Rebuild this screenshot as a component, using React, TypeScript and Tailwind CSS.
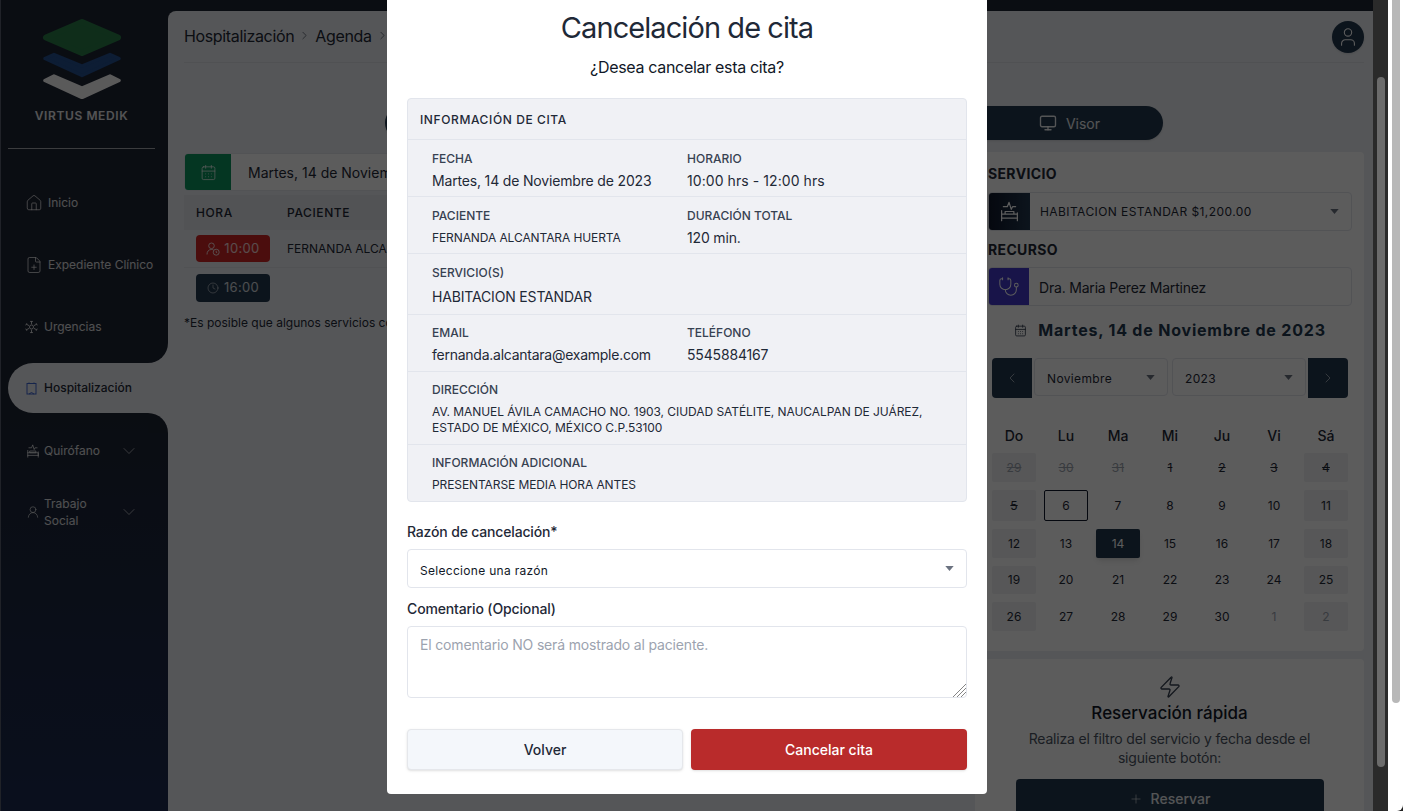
import { Home, FilePlus, Monitor, Stethoscope, Zap, Plus, ChevronLeft, ChevronRight, ChevronDown, User, Clock, UserRound, CalendarDays } from "lucide-react";

const Caret = ({ className = "" }: { className?: string }) => (
  <svg width="9" height="5" viewBox="0 0 10 6" className={className}><path d="M0 0h10L5 6z" fill="currentColor" /></svg>
);

const BedPulse = ({ size = 24, className = "" }: { size?: number; className?: string }) => (
  <svg width={size} height={size} viewBox="0 0 24 24" fill="none" stroke="currentColor" strokeWidth="1.4" strokeLinecap="round" strokeLinejoin="round" className={className}>
    <path d="M5 6.5h4.5l2-5 2.5 8 1.5-3H19" />
    <path d="M3 11v11.5M21 13.5v9M3 19.5h18M3 15h18v4.500M7 12h10v3H7z" />
  </svg>
);

const UserClock = () => (
  <svg width="14" height="14" viewBox="0 0 14 14" fill="none" stroke="currentColor" strokeWidth="1">
    <circle cx="5.5" cy="3.8" r="2.8" />
    <path d="M1 12.500c0-3 1.500-5 4.500-5 .8 0 1.500.1 2 .4" />
    <circle cx="10.200" cy="10.200" r="3" />
    <path d="M10.200 8.800v1.500l1 .6" />
  </svg>
);

const VirusIcon = ({ className = "" }: { className?: string }) => (
  <svg width="13" height="14" viewBox="0 0 14 14" fill="none" stroke="currentColor" strokeWidth="1" className={className}>
    <circle cx="7" cy="7" r="2.2" />
    <path d="M7 1v3M7 10v3M1.500 4l2.800 1.500M9.700 8.500 12.500 10M1.500 10l2.800-1.500M9.700 5.500 12.500 4" />
    <path d="M5.500 1h3M5.500 13h3M.8 5.200 2 3M12 11l1.200-2.200M.8 8.800 2 11M12 3l1.200 2.200" />
  </svg>
);

const Logo = () => (
  <svg width="80" height="80" viewBox="0 0 80 80" className="mx-auto">
    <path d="M40 3 76 18.500 40 34 4 18.500Z" fill="#2a7d49" stroke="#2a7d49" strokeWidth="6" strokeLinejoin="round" />
    <path d="M3 39.500 12 35.500 40 47 68 35.500 77 39.500 40 56.500Z" fill="#245090" stroke="#245090" strokeWidth="3.5" strokeLinejoin="round" />
    <path d="M3 61.500 12 57 40 69 68 57 77 61.500 40 78.500Z" fill="#fafafa" stroke="#fafafa" strokeWidth="3.5" strokeLinejoin="round" />
  </svg>
);

const nav = [
  { label: "Inicio", icon: <Home size={18} strokeWidth={1.1} />, gap: "gap-[5px]" },
  { label: "Expediente Clínico", icon: <FilePlus size={18} strokeWidth={1.1} />, gap: "gap-[5px]" },
  { label: "Urgencias", icon: <VirusIcon />, gap: "gap-[6px]" },
];

const Field = ({ label, value, small, mt = "mt-[4px]", trk = "tracking-[-0.012em]" }: { label: string; value: string; small?: boolean; mt?: string; trk?: string }) => (
  <div>
    <div className="text-xs font-medium leading-4 text-[#374151]">{label}</div>
    <div className={`${mt} leading-5 text-[#1f2937] ${small ? "text-xs tracking-[-0.008em]" : `text-sm ${trk}`}`}>{value}</div>
  </div>
);

const InfoRow = ({ children, className = "" }: { children: React.ReactNode; className?: string }) => (
  <div className={`border-t border-[#e2e5ec] pl-[24px] ${className}`}>{children}</div>
);

const days: { d: string; weekend?: boolean; strike?: boolean; faded?: boolean; outline?: boolean; active?: boolean }[][] = [
  [{ d: "29", weekend: true, strike: true, faded: true }, { d: "30", strike: true, faded: true }, { d: "31", strike: true, faded: true }, { d: "1", strike: true }, { d: "2", strike: true }, { d: "3", strike: true }, { d: "4", weekend: true, strike: true }],
  [{ d: "5", weekend: true, strike: true }, { d: "6", outline: true }, { d: "7" }, { d: "8" }, { d: "9" }, { d: "10" }, { d: "11", weekend: true }],
  [{ d: "12", weekend: true }, { d: "13" }, { d: "14", active: true }, { d: "15" }, { d: "16" }, { d: "17" }, { d: "18", weekend: true }],
  [{ d: "19", weekend: true }, { d: "20" }, { d: "21" }, { d: "22" }, { d: "23" }, { d: "24" }, { d: "25", weekend: true }],
  [{ d: "26", weekend: true }, { d: "27" }, { d: "28" }, { d: "29" }, { d: "30" }, { d: "1", faded: true }, { d: "2", weekend: true, faded: true }],
];

const Calendar = () => (
  <div className="ml-[4px] mt-[28px] w-[356px]">
    <div className="grid grid-cols-7 gap-x-2 text-center text-sm font-medium leading-5 text-[#1f2937]">
      {["Do", "Lu", "Ma", "Mi", "Ju", "Vi", "Sá"].map((d) => <div key={d}>{d}</div>)}
    </div>
    <div className="mt-[7px] grid grid-cols-7 grid-rows-[29px_31px_29px_28px_29px] gap-x-2 gap-y-2">
      {days.flat().map((c, i) => (
        <div
          key={i}
          className={`flex h-full items-center justify-center rounded-[2px] text-xs ${c.weekend ? "bg-[#f0f1f3]" : ""} ${c.strike ? "line-through" : ""} ${c.faded ? "text-[#9ca3af]" : "text-[#1f2937]"} ${c.outline ? "border border-[#0f172a]" : ""} ${c.active ? "bg-[#22384f] text-white shadow-md" : ""}`}
        >
          {c.d}
        </div>
      ))}
    </div>
  </div>
);

export default function App() {
  return (
    <div className="flex h-[811px] w-[1403px] overflow-hidden bg-white [font-family:Inter,sans-serif]">
      <div className="relative flex h-full w-[1373px] shrink-0 overflow-hidden bg-gradient-to-b from-[#1e2433] via-[#1e2433] to-[#1c2b52]">
        {/* Sidebar */}
        <aside className="flex w-[168px] shrink-0 flex-col border-l border-[#5a6070] pl-[7px] text-white">
          <div className="pr-[13px] pt-[19px]">
            <Logo />
            <div className="mt-[9px] text-center text-xs font-semibold leading-4 tracking-[0.05em] text-white/90">VIRTUS MEDIK</div>
            <div className="mt-[24px] h-px bg-white/60" />
          </div>
          <nav className="mt-[28px] flex flex-col gap-3">
            {nav.map((n) => (
              <div key={n.label} className={`flex h-[50px] items-center pl-[17px] pt-[2px] text-xs text-white/85 ${n.gap}`}>
                {n.icon}<span>{n.label}</span>
              </div>
            ))}
            <div className="relative flex h-[50px] items-center gap-[7px] rounded-l-full bg-[#eceff4] pl-[18px] text-xs font-medium text-[#1f2937]">
              <div className="absolute -top-5 right-0 h-5 w-5 bg-[#eceff4]"><div className="h-full w-full rounded-br-[20px] bg-[#1e2433]" /></div>
              <div className="absolute -bottom-5 right-0 h-5 w-5 bg-[#eceff4]"><div className="h-full w-full rounded-tr-[20px] bg-[#1e2433]" /></div>
              <svg width="11" height="13" viewBox="0 0 11 13" fill="none" stroke="#3f66d0" strokeWidth="1"><rect x="1" y="1.500" width="9" height="10.500" /><path d="M3 1.500V.5M8 1.500V.5M3 12l2.500-1.500L8 12" /></svg>
              <span>Hospitalización</span>
            </div>
            <div className="flex h-[50px] items-center pl-[18px] pr-[29px] pt-[2px] text-xs text-white/85">
              <BedPulse size={14} />
              <span className="ml-[4px] flex-1">Quirófano</span>
              <ChevronDown size={20} strokeWidth={0.8} />
            </div>
            <div className="flex h-[50px] items-center pl-[18px] pr-[29px] text-xs leading-[17px] text-white/85">
              <UserRound size={14} strokeWidth={1.2} />
              <span className="ml-[4px] flex-1">Trabajo<br />Social</span>
              <ChevronDown size={20} strokeWidth={0.8} />
            </div>
          </nav>
        </aside>

        {/* Main */}
        <main className="mt-[11px] flex min-w-0 flex-1 flex-col overflow-hidden rounded-tl-lg bg-[#eceff4] pl-4 pr-[9px]">
          <header className="flex h-[52px] shrink-0 items-center justify-between border-b border-[#dde0e6]">
            <div className="flex items-center gap-[4px] pb-[2px] text-base tracking-[-0.022em] text-[#1f2937]">
              <span>Hospitalización</span><ChevronRight size={13} strokeWidth={1.1} /><span>Agenda</span><ChevronRight size={13} strokeWidth={1.1} />
            </div>
            <div className="flex h-8 w-8 items-center justify-center rounded-full bg-[#22384f] text-white shadow"><User size={22} strokeWidth={1.2} /></div>
          </header>

          <div className="mt-[43px] ml-[201px] mr-[201px] flex h-[34px] shrink-0 items-center justify-end rounded-full bg-[#22384f] pr-[63px] text-sm text-white/90 shadow">
            <Monitor size={18} strokeWidth={1.8} className="mr-[9px]" /><span className="pt-[2px]">Visor</span>
          </div>

          <div className="mt-3 flex min-h-0 flex-1 gap-2">
            {/* left */}
            <section className="min-w-0 flex-1">
              <div className="mt-px flex h-[38px] overflow-hidden rounded border border-[#e2e5ec] bg-white text-sm text-[#1f2937]">
                <div className="flex w-[46px] items-center justify-center bg-[#0d9660] text-white"><CalendarDays size={17} strokeWidth={1} /></div>
                <div className="flex items-center pl-[17px] pt-px">Martes, 14 de Noviembre de 2023</div>
              </div>
              <div className="mt-[4px] flex h-[35px] items-center bg-[#e3e5ea] pl-3 text-xs font-medium tracking-[0.05em] text-[#1f2937]">
                <span className="w-[91px]">HORA</span><span>PACIENTE</span>
              </div>
              <div className="flex h-[38px] items-center border-b border-[#dfe2e8] pl-3 text-xs text-[#1f2937]">
                <div className="flex h-[27px] w-[74px] items-center justify-center gap-1 rounded bg-[#cf2525] text-[13px] tracking-wide text-white/80"><UserClock />10:00</div>
                <span className="ml-[17px]">FERNANDA ALCANTARA HUERTA</span>
              </div>
              <div className="flex h-[39px] items-center pl-3 pt-px">
                <div className="flex h-[28px] w-[74px] items-center justify-center gap-[5px] rounded bg-[#22384f] text-[13px] tracking-wide text-white/80"><Clock size={12} strokeWidth={1.2} />16:00</div>
              </div>
              <p className="mt-[8px] w-[203px] overflow-hidden whitespace-nowrap text-xs leading-4 text-[#1f2937]">*Es posible que algunos servicios con costo adicional</p>
            </section>

            {/* right */}
            <section className="flex w-[389px] shrink-0 flex-col gap-2">
              <div className="h-[499px] shrink-0 rounded bg-white pl-[13px] pr-3 pt-[13px]">
                <div className="text-sm font-bold leading-[18px] tracking-wide text-[#1f2937]">SERVICIO</div>
                <div className="mt-[9px] flex h-[39px] items-center overflow-hidden rounded border border-[#e2e5ec] pr-[12px]">
                  <div className="flex h-full w-[41px] items-center justify-center bg-gradient-to-r from-[#0f172a] to-[#22384f] text-white"><BedPulse size={21} /></div>
                  <span className="ml-[10px] flex-1 pt-px text-xs tracking-[0.035em] text-[#1f2937]">HABITACION ESTANDAR $1,200.00</span>
                  <Caret className="text-[#6b7280]" />
                </div>
                <div className="mt-[10px] text-sm font-bold leading-[18px] tracking-wide text-[#1f2937]">RECURSO</div>
                <div className="mt-[8px] flex h-[39px] items-center overflow-hidden rounded border border-[#e2e5ec]">
                  <div className="flex h-full w-[40px] items-center justify-center bg-[#4338ca] text-white"><Stethoscope size={22} strokeWidth={1.1} /></div>
                  <span className="ml-[10px] pt-[2px] text-sm tracking-[-0.014em] text-[#1f2937]">Dra. Maria Perez Martinez</span>
                </div>
                <div className="mt-[12px] flex items-center justify-center gap-[11px] text-[#22384f]">
                  <CalendarDays size={13} strokeWidth={1.6} className="text-[#374151]" />
                  <span className="text-base font-bold leading-6 tracking-wider">Martes, 14 de Noviembre de 2023</span>
                </div>
                <div className="ml-[4px] mt-[16px] flex h-10 w-[356px] gap-[2px]">
                  <div className="flex w-10 items-center justify-center rounded-l bg-[#22384f] text-white/80"><ChevronLeft size={16} strokeWidth={1} /></div>
                  <div className="flex h-[38px] flex-1 items-center justify-between rounded border border-[#e2e5ec] pl-3 pr-[12px] text-xs tracking-[0.03em] text-[#1f2937]"><span className="pt-[4px]">Noviembre</span><Caret className="text-[#6b7280]" /></div>
                  <div className="ml-[2px] flex h-[38px] flex-1 items-center justify-between rounded border border-[#e2e5ec] pl-3 pr-[12px] text-xs tracking-[0.03em] text-[#1f2937]"><span className="pt-[4px]">2023</span><Caret className="text-[#6b7280]" /></div>
                  <div className="flex w-10 items-center justify-center rounded-r bg-[#22384f] text-white/80"><ChevronRight size={16} strokeWidth={1} /></div>
                </div>
                <Calendar />
              </div>
              <div className="flex flex-1 flex-col items-center rounded bg-white pt-4 text-center">
                <Zap size={24} strokeWidth={1.4} className="text-[#374151]" />
                <h3 className="mt-[2px] text-[17px] font-medium leading-6 text-[#111827]">Reservación rápida</h3>
                <p className="mt-[4px] w-[300px] text-sm leading-[19px] tracking-[-0.013em] text-[#4b5563]">Realiza el filtro del servicio y fecha desde el siguiente botón:</p>
                <div className="mt-[12px] flex h-10 w-[308px] shrink-0 items-center justify-center gap-2 rounded-t bg-[#22384f] text-sm font-medium text-white/90"><Plus size={14} strokeWidth={1} />Reservar</div>
              </div>
            </section>
          </div>
        </main>

        {/* Overlay + modal */}
        <div className="absolute inset-0 flex justify-center bg-black/[.64]">
          <div className="ml-[1px] h-[794px] w-[600px] rounded-b bg-white px-5 pt-[10px]">
            <h2 className="text-center text-[29px] font-normal leading-9 tracking-[-0.032em] text-[#1f2937]">Cancelación de cita</h2>
            <p className="mt-[9px] text-center text-base leading-6 tracking-[-0.02em] text-[#111827]">¿Desea cancelar esta cita?</p>
            <div className="mt-[19px] rounded border border-[#e2e5ec] bg-[#f0f1f5]">
              <div className="flex h-10 items-center pl-3 pt-px text-xs font-[450] tracking-[0.05em] text-[#1f2937]">INFORMACIÓN DE CITA</div>
              <InfoRow className="grid h-[57px] grid-cols-[255px_1fr] pt-[11px]">
                <Field label="FECHA" value="Martes, 14 de Noviembre de 2023" />
                <Field label="HORARIO" value="10:00 hrs - 12:00 hrs" trk="tracking-[0.005em]" />
              </InfoRow>
              <InfoRow className="grid h-[57px] grid-cols-[255px_1fr] pt-[11px]">
                <Field label="PACIENTE" value="FERNANDA ALCANTARA HUERTA" small />
                <Field label="DURACIÓN TOTAL" value="120 min." />
              </InfoRow>
              <InfoRow className="h-[61px] pt-[11px]">
                <Field label="SERVICIO(S)" value="HABITACION ESTANDAR" mt="mt-[6px]" />
              </InfoRow>
              <InfoRow className="grid h-[57px] grid-cols-[255px_1fr] pt-[10px]">
                <Field label="EMAIL" value="fernanda.alcantara@example.com" trk="tracking-[-0.018em]" />
                <Field label="TELÉFONO" value="5545884167" />
              </InfoRow>
              <InfoRow className="h-[73px] pt-[10px]">
                <div className="text-xs font-medium leading-4 text-[#374151]">DIRECCIÓN</div>
                <div className="mt-[6px] w-[510px] text-xs leading-4 tracking-[-0.005em] text-[#1f2937]">AV. MANUEL ÁVILA CAMACHO NO. 1903, CIUDAD SATÉLITE, NAUCALPAN DE JUÁREZ, ESTADO DE MÉXICO, MÉXICO C.P.53100</div>
              </InfoRow>
              <InfoRow className="h-[57px] pt-[10px]">
                <Field label="INFORMACIÓN ADICIONAL" value="PRESENTARSE MEDIA HORA ANTES" small mt="mt-[4px]" />
              </InfoRow>
            </div>
            <label className="mt-[20px] block text-sm font-medium leading-5 tracking-[-0.012em] text-[#1f2937]">Razón de cancelación*</label>
            <div className="mt-[7px] flex h-[39px] items-center justify-between rounded border border-[#e2e5ec] bg-white pl-3 pr-[12px] text-xs tracking-[0.025em] text-[#111827]">
              <span className="pt-[4px]">Seleccione una razón</span><Caret className="text-[#6b7280]" />
            </div>
            <label className="mt-[11px] block text-sm font-medium leading-5 tracking-[-0.01em] text-[#1f2937]">Comentario (Opcional)</label>
            <div className="relative mt-[7px]">
              <textarea
                readOnly
                placeholder="El comentario NO será mostrado al paciente."
                className="block h-[72px] w-full resize-none rounded border border-[#e2e5ec] px-3 py-2 text-sm leading-5 tracking-[-0.012em] placeholder:text-[#9ca3af]"
              />
              <svg width="13" height="13" viewBox="0 0 13 13" stroke="#777" strokeWidth="0.9" className="absolute bottom-[1px] right-[1px]">
                <path d="M0 13 13 0M4 13l9-9M8 13l5-5" />
              </svg>
            </div>
            <div className="mt-[31px] flex justify-between">
              <button className="h-[41px] w-[276px] rounded-sm border border-[#e5e7eb] bg-[#f4f7fb] text-sm font-medium text-[#1f2937] shadow">Volver</button>
              <button className="h-[41px] w-[276px] rounded-sm bg-[#b92b2b] text-sm font-medium text-white shadow-sm">Cancelar cita</button>
            </div>
          </div>
        </div>
      </div>

      {/* inner scrollbar */}
      <div className="h-full w-[15px] shrink-0 bg-[#2a2a2a] pl-1 pr-[3px] pt-[77px]">
        <div className="h-[690px] rounded-full bg-[#6b6b6b]" />
      </div>
      {/* outer scrollbar */}
      <div className="relative h-full flex-1 bg-white pl-1 pr-[3px]">
        <div className="h-[703px] rounded-b-full bg-[#b8b8b8]" />
        <div className="absolute bottom-0 right-0 h-[6px] w-[6px] bg-[#222]"><div className="h-full w-full rounded-br-[6px] bg-white" /></div>
      </div>
    </div>
  );
}
